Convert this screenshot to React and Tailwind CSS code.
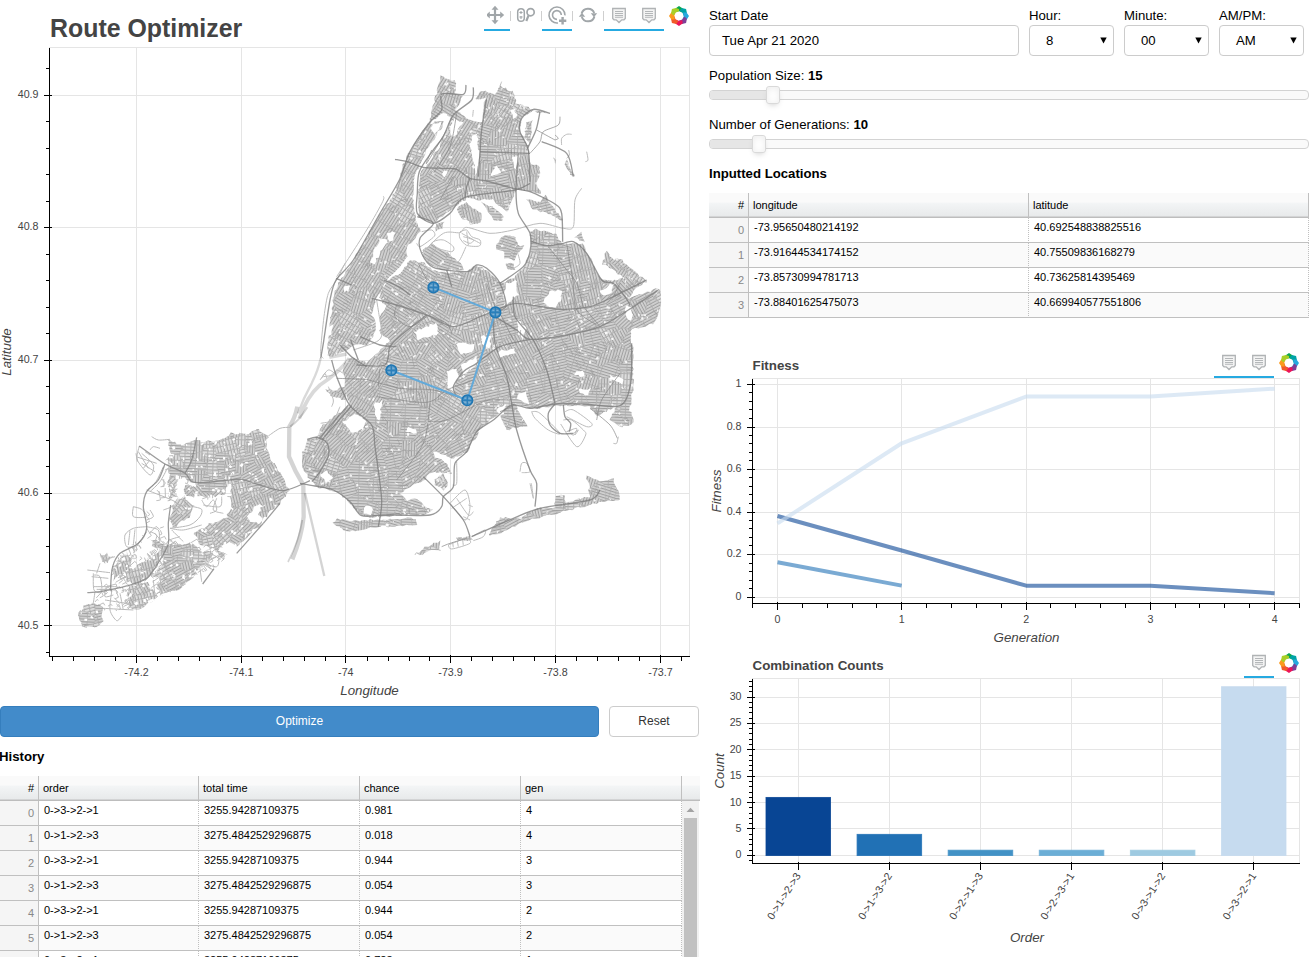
import React from "react";

/* ---------- street map generator ---------- */

function makeRandom(seed) {
  let s = seed;
  return () => {
    s = (s * 1664525 + 1013904223) % 4294967296;
    return s / 4294967296;
  };
}

const parse = (str) => str.trim().split(/\s+/).map((p) => p.split(",").map(Number));

// Breaks a coarse outline into short jagged steps, like the edge of a street grid.
function roughen(str, rnd, amp = 4) {
  const pts = parse(str);
  const out = [];
  pts.forEach((p, i) => {
    const q = pts[(i + 1) % pts.length];
    const n = Math.max(1, Math.round(Math.hypot(q[0] - p[0], q[1] - p[1]) / 9));
    for (let k = 0; k < n; k++) {
      const t = k / n;
      out.push([
        p[0] + (q[0] - p[0]) * t + (rnd() - 0.5) * amp * 2,
        p[1] + (q[1] - p[1]) * t + (rnd() - 0.5) * amp * 2,
      ]);
    }
  });
  return out.map((p) => p[0].toFixed(1) + "," + p[1].toFixed(1)).join(" ");
}

// Smooth curve through a list of points.
function curve(str) {
  const p = parse(str);
  let d = `M${p[0][0]},${p[0][1]}`;
  for (let i = 0; i < p.length - 1; i++) {
    const a = p[i - 1] || p[i];
    const b = p[i];
    const c = p[i + 1];
    const e = p[i + 2] || c;
    const f = (v) => v.toFixed(1);
    d += ` C${f(b[0] + (c[0] - a[0]) / 7)},${f(b[1] + (c[1] - a[1]) / 7)} ${f(c[0] - (e[0] - b[0]) / 7)},${f(c[1] - (e[1] - b[1]) / 7)} ${c[0]},${c[1]}`;
  }
  return d;
}

function clipHalf(poly, mx, my, nx, ny) {
  const out = [];
  for (let i = 0; i < poly.length; i++) {
    const a = poly[i];
    const b = poly[(i + 1) % poly.length];
    const da = (a[0] - mx) * nx + (a[1] - my) * ny;
    const db = (b[0] - mx) * nx + (b[1] - my) * ny;
    if (da <= 0) out.push(a);
    if (da * db < 0) {
      const t = da / (da - db);
      out.push([a[0] + (b[0] - a[0]) * t, a[1] + (b[1] - a[1]) * t]);
    }
  }
  return out;
}

// Voronoi districts, each with the street direction of its nearest anchor.
function districts(x0, y0, x1, y1, step, anchors, rnd, looseShare) {
  const cols = Math.ceil((x1 - x0) / step);
  const rows = Math.ceil((y1 - y0) / step);
  const seeds = [];
  for (let r = 0; r < rows; r++)
    for (let c = 0; c < cols; c++)
      seeds.push([x0 + (c + rnd()) * step, y0 + (r + rnd()) * step]);
  return seeds.map((s, i) => {
    let poly = [
      [s[0] - step * 2, s[1] - step * 2],
      [s[0] + step * 2, s[1] - step * 2],
      [s[0] + step * 2, s[1] + step * 2],
      [s[0] - step * 2, s[1] + step * 2],
    ];
    const r = Math.floor(i / cols);
    const c = i % cols;
    for (let dr = -2; dr <= 2; dr++)
      for (let dc = -2; dc <= 2; dc++) {
        const rr = r + dr;
        const cc = c + dc;
        if ((!dr && !dc) || rr < 0 || cc < 0 || rr >= rows || cc >= cols) continue;
        const o = seeds[rr * cols + cc];
        poly = clipHalf(poly, (s[0] + o[0]) / 2, (s[1] + o[1]) / 2, o[0] - s[0], o[1] - s[1]);
      }
    let best = anchors[0];
    let bd = Infinity;
    anchors.forEach((a) => {
      const d = Math.hypot(a[0] - s[0], a[1] - s[1]);
      if (d < bd) {
        bd = d;
        best = a;
      }
    });
    let ang = best[2] + (rnd() - 0.5) * 14;
    const roll = rnd();
    if (roll < (best[3] ?? 0.25)) ang += 90;
    const k = ((Math.round(ang / 15) % 12) + 12) % 12;
    return { d: poly.map((p) => p[0].toFixed(1) + "," + p[1].toFixed(1)).join(" "), k, loose: rnd() < looseShare };
  });
}

const MAIN_LAND = [
  // Manhattan
  "385,222 358,255 330,305 308,345 300,385 280,435 240,490 205,555 160,630 130,680 112,700 98,760 88,820 86,870 82,900 88,922 130,905 165,885 205,885 222,850 226,822 215,795 226,750 262,690 300,650 322,618 316,600 346,562 360,545 346,505 338,430 344,375 366,330 382,295 408,260 432,215 415,215",
  // Bronx
  "420,78 465,92 467,130 488,135 468,180 500,205 545,215 555,150 585,130 600,108 640,125 648,160 700,180 665,205 660,245 685,290 690,340 716,345 718,370 712,400 725,430 700,425 650,415 640,440 620,488 600,470 580,450 540,450 500,445 480,458 400,520 375,510 356,495 355,430 362,370 392,330 420,290 440,240 455,200 430,190 385,222 410,130",
  "468,475 500,455 545,492 540,518 512,522 480,500", "545,455 575,470 608,498 608,514 585,512 570,490", "680,450 720,455 735,432 750,462 785,505 790,515 745,490 700,480",
  "525,150 540,122 580,130 582,142", "690,178 750,190 710,188", "800,330 825,380 812,376 796,345", "758,322 772,326 765,342", "680,215 695,210 690,280 672,262",
  "412,525 432,515 430,535 405,545",
  // Astoria, College Point, Throgs Neck
  "370,600 395,582 450,615 482,640 492,660 440,662 400,652 368,620",
  "588,590 612,556 645,560 655,585 672,588 665,603 650,605 645,632 612,625 610,600 588,597", "615,640 640,640 645,660 625,655",
  "825,560 845,548 855,575 838,572",
  // Brooklyn and Queens
  "330,630 372,640 400,660 440,668 500,668 530,646 560,660 600,700 640,684 668,655 690,610 692,545 706,538 770,552 786,580 845,580 862,610 880,645 900,685 945,692 968,680 905,640 920,604 940,630 960,625 1040,695 1010,712 985,745 1076,715 1082,722 1080,780 1060,822 990,840 998,900 1000,1010 990,1080 1000,1120 965,1132 930,1110 950,1068 890,1100 870,1068 790,1067 690,1076 645,1062 682,1128 620,1140 598,1090 545,1130 500,1208 452,1228 400,1205 440,1240 458,1270 430,1270 395,1265 360,1300 330,1308 300,1330 320,1350 345,1345 395,1382 380,1392 240,1400 190,1400 150,1360 110,1325 50,1310 36,1295 10,1260 5,1215 22,1168 50,1162 62,1130 110,1095 150,1065 140,1035 132,990 128,945 152,920 200,938 240,900 268,870 240,850 240,800 262,770 236,745 255,700 300,668",
  "75,1020 110,1018 138,1010 136,1050 100,1040",
  // Coney Island, the Rockaways, Breezy Point
  "100,1420 110,1405 140,1412 350,1405 352,1425 230,1430 140,1445",
  "570,1445 600,1402 650,1405 720,1375 765,1372 765,1335 792,1338 800,1356 870,1340 866,1300 858,1278 900,1292 940,1285 960,1330 958,1348 880,1362 790,1385 690,1410 570,1460",
  "470,1462 510,1460 515,1470 475,1472", "352,1512 375,1490 395,1485 420,1470 422,1500 395,1502 365,1514",
  "402,1290 430,1270 445,1300 430,1322 405,1305",
];

const MAIN_HOLES = [
  "448,240 465,208 490,215 470,250 455,265", "500,155 548,150 545,210 525,208 505,196", "515,260 530,250 536,290 534,370 526,380 520,330 510,290",
  "436,95 445,100 440,110", "395,225 425,215 405,260 395,245", "590,350 600,370 570,375", "630,185 645,178 650,200 640,205", "500,450 530,455 540,475 520,480",
  "220,600 250,565 262,575 235,620 222,645 212,640", "262,550 285,545 280,575 262,572", "130,710 150,705 148,722 130,725", "78,830 98,825 96,850 78,855",
  "620,700 650,690 655,735 612,770 610,735", "750,725 785,722 785,745 770,775 725,760", "655,810 680,835 670,870 655,850", "340,845 410,818 415,850 355,870",
  "470,882 520,880 520,905 480,910", "540,860 575,855 570,895 548,885", "440,965 470,955 475,985 460,1025 440,1005", "480,950 530,918 530,945 490,975",
  "590,905 640,895 650,910 600,925", "655,1030 680,1025 685,1060 655,1050", "930,975 970,985 965,1000 928,990", "130,1115 165,1090 200,1110 190,1140 155,1145",
  "318,1135 348,1135 348,1148 318,1148", "60,1275 80,1262 98,1285 78,1300", "225,1060 245,1050 240,1110 222,1095", "395,1200 450,1225 445,1240 400,1215",
  "190,1372 215,1370 215,1398 192,1392", "975,770 998,770 996,810 980,805", "835,1020 870,1015 868,1035 840,1032", "815,970 850,965 850,980", "700,1060 720,1055 715,1065",
  "590,1080 620,1060 610,1090 600,1100", "225,765 240,800 235,860 222,865 236,820 222,795", "900,720 940,700 935,730 912,735",
  "640,320 655,310 650,360 640,345", "430,365 440,362 438,385 428,380",
];

const MAIN_ROADS = [
  "285,328 325,336 370,352 430,355 470,358 510,385 560,393 640,415 690,425 765,462 785,490 788,575",
  "520,112 515,150 460,195 430,260 400,300 358,365 352,430 352,490 400,520 450,490 495,442 645,420 690,400",
  "498,105 490,133 425,132 425,180 385,222 330,305 298,390 240,490 160,630 108,690 90,750 70,880 62,925",
  "560,145 545,240 540,310 535,380", "510,385 500,410 495,442", "540,305 690,310",
  "750,190 700,178 665,205 660,245 685,300 690,395", "655,310 648,420 655,490 690,550 690,605 670,650 600,700",
  "720,185 708,240 680,300", "725,275 800,310 820,380",
  "695,575 740,587 790,580 820,575 860,610 905,690 940,700 975,740 990,765",
  "352,500 400,520 360,565 365,610 400,652 500,665 530,645 560,655 600,700 618,768 585,785",
  "440,660 455,710", "108,685 155,705", "252,690 300,712 330,735",
  "215,745 290,765 380,795 460,830 540,800 590,780 650,760 780,778 870,770 940,740 1040,690",
  "640,740 645,800 700,870 740,960 765,1060", "585,800 650,840 690,868 800,855 900,830 985,780 1075,720",
  "470,1040 460,1010 490,965 530,940 600,890 690,868",
  "580,790 585,880 620,980 635,1060 650,1140 690,1260 710,1300 705,1370",
  "765,1062 745,1090 750,1125 780,1150 820,1150", "790,1065 795,1100 812,1120 808,1145",
  "0,1300 45,1308 100,1320 150,1355 185,1397 250,1395 390,1395 425,1370 430,1340 460,1310 465,1240 500,1205 530,1145 580,1110 635,1065 690,1075 765,1062 850,1062 960,1067 992,1000 995,880",
  "380,795 310,850 270,890 255,945 170,945", "180,860 240,885 290,890", "120,885 160,925 200,950", "152,870 175,930",
  "95,930 110,980 150,1067 215,1125 225,1190 245,1350 235,1430", "155,1067 65,1170", "146,1064 58,1165",
  "22,1168 50,1162 80,1178 86,1215 60,1265 36,1295", "370,1280 430,1340 490,1410 510,1460", "515,1460 640,1405 720,1375 870,1350 900,1320",
];

const SECOND_ROADS = [
  "780,200 775,225 730,245 720,275 690,310", "710,240 765,270", "765,270 775,265 765,255", "745,590 800,660 830,700 850,770", "640,1068 600,1085",
  "200,988 300,1015 400,1020 500,1050", "230,1040 380,1057 440,1020 520,990", "390,1060 370,1180 290,1290", "385,1115 440,1110 550,1055 600,1050",
  "380,795 440,820 455,850", "870,1075 930,1125 952,1165", "960,970 905,1050 890,1110", "425,1490 450,1480 500,1465", "820,700 830,780 890,825", "800,580 820,700",
  "395,300 380,340 440,240", "470,190 450,290 400,370", "590,785 560,700", "290,765 285,800 330,830 380,800", "850,770 900,830", "420,450 460,380",
  "110,985 200,988", "235,1010 240,950", "260,1395 300,1390", "355,640 380,690", "640,870 600,790", "940,740 960,700",
];

const THIN_ROADS = [
  "365,610 430,550 480,548 500,532 570,550 640,540 720,520 790,535 820,530 825,450 845,415", "250,438 248,455 200,540 110,680",
  "70,925 62,905 72,800 85,730 110,690 135,640", "480,545 500,540 515,560 540,570 538,588 500,586 480,565 478,548", "490,560 520,570 510,580 490,572", "485,550 540,580", "500,545 505,585",
  "445,635 475,635 498,590", "695,1085 720,1090 780,1150 745,1140 705,1105 695,1085", "782,1122 830,1190 857,1155 850,1140 815,1110 790,1110",
  "795,1085 820,1080 875,1120 860,1130 800,1100", "450,1360 495,1320 510,1370 495,1410 450,1360", "470,1345 505,1395 520,1385", "505,1365 518,1370", "455,1375 500,1345", "490,1400 510,1410",
  "445,1485 470,1475 500,1465 510,1480 455,1497 445,1485", "515,1460 555,1440 550,1460 520,1472", "460,1492 458,1478", "475,1490 472,1474", "490,1486 488,1470", "660,1265 665,1240 680,1240 690,1265 665,1268",
  "785,285 785,265 800,253 815,253", "806,300 808,315 800,325", "860,305 864,330 856,335", "230,750 238,800 246,850 230,875 160,900",
  "380,600 400,575 430,570 460,590 455,605 410,595", "395,580 420,600", "70,980 100,975 110,960 130,970", "60,990 85,960 110,975", "65,985 75,970 80,985",
  "85,1010 100,1050 95,1070", "690,1300 700,1345 694,1300", "350,870 320,850 350,820 380,815", "345,1515 350,1508 360,1515", "600,108 605,95",
  "365,545 395,540 405,555 390,570 360,590 350,580", "660,870 662,840", "940,1180 950,1180 955,1160", "820,1150 835,1140 825,1155",
  "470,1235 470,1300 458,1305", "120,1070 100,1110 62,1120", "640,655 660,640 650,600", "480,665 440,690", "815,1140 800,1145 830,1135 822,1155 810,1150",
  "520,180 518,200", "500,460 540,510 520,515 530,490",
];

const MAIN_ANCHORS = [
  [250, 450, -62, 0.08], [150, 700, -62, 0.08], [190, 600, -62, 0.08], [120, 850, -62, 0.3], [330, 330, -62, 0.1],
  [430, 300, -62], [600, 180, -65, 0.1], [600, 270, 5, 0.1], [560, 420, 80], [420, 450, -30], [650, 360, 80, 0.2],
  [350, 700, 30, 0.1], [480, 730, 15, 0.2], [560, 760, 75, 0.3], [740, 640, 5, 0.1], [830, 680, 75], [980, 680, 40], [1040, 770, -35, 0.1],
  [320, 900, -40], [300, 980, 10, 0.1], [350, 1030, 82, 0.1], [400, 920, 35, 0.1], [540, 990, -20], [470, 1060, 30],
  [740, 980, -20, 0.1], [680, 920, 60], [880, 950, 15], [950, 1030, 0, 0.3], [850, 820, -20], [640, 1110, 5, 0.05],
  [170, 1000, -55, 0.1], [130, 1200, -50, 0.06], [50, 1220, -70, 0.1], [200, 1160, -50, 0.1], [260, 1250, -5, 0.1], [300, 1130, 0],
  [450, 1170, -35, 0.15], [360, 1260, -35], [260, 1350, 5, 0.2], [250, 1420, 5], [650, 1410, -20, 0.1], [900, 1320, 10], [200, 1300, -5, 0.1],
];

const SI_OUTLINE =
  "350,90 400,105 440,92 510,95 545,70 600,70 650,75 656,140 690,185 716,240 640,335 560,425 520,455 500,470 440,495 390,537 330,560 270,598 170,605 130,580 130,530 180,515 188,460 215,430 290,365 290,290 330,220 350,165";

const SI_LAND = [
  "350,90 400,105 440,92 510,95 545,70 600,70 620,58 650,75 656,140 690,185 716,240 690,280 640,330 620,310 640,285 610,290 590,320 600,340 640,338 600,372 560,400 530,400 500,420 455,405 430,370 470,345 530,325 545,280 540,215 520,255 470,260 440,255 440,225 410,210 380,195 378,265 358,265 355,170 350,150 375,140 360,120",
  "372,275 400,262 430,290 418,320 370,355 358,330", "405,225 440,232 432,262 405,258",
  "340,410 400,400 430,400 455,430 480,415 490,440 440,480 435,495 390,535 350,545 325,550 325,500 300,500 340,460",
  "215,440 235,425 245,470 215,490 190,510 188,470", "225,485 300,450 340,410 330,450 300,500 260,520 225,515", "300,390 340,400 335,420 310,405",
  "240,530 290,515 310,540 320,560 290,580 270,598 240,592 232,560", "88,612 105,588 130,578 150,585 160,600 158,640 140,648 105,655 92,640",
  "540,380 600,345 605,370 560,410", "500,420 530,430 525,448 505,440", "152,440 172,432 186,442 175,456 158,452",
];
const SI_ROADS = [
  "268,108 345,162 405,190 425,215 460,218 520,212 575,208 620,222 700,242 780,212", "440,82 425,150 405,190",
  "345,162 325,210 290,245 280,290 290,355 265,400 210,430 188,470 182,530 185,545", "362,285 355,340 355,400 330,450 290,505 230,528 150,545 112,548",
  "640,340 560,430", "690,280 640,340", "492,476 458,522",
];
const SI_THIN = [
  "305,80 325,90 360,88", "268,108 262,150 300,195 310,165 275,130", "258,140 320,160", "275,160 315,185", "265,125 295,175", "290,240 375,275 365,290 340,300", "250,290 275,298 290,320 250,320 250,290",
  "290,350 250,355 225,375 230,410 260,405 290,365", "240,362 235,405", "255,358 250,405", "290,350 325,360 328,390", "300,365 320,375 315,395", "430,290 455,298 450,320 420,345 360,355", "360,355 400,360 455,345",
  "455,270 470,290 490,270 500,300 480,310", "460,285 510,290 515,260", "500,265 490,300 520,310", "112,480 180,488", "130,490 132,540 155,545 150,500 130,495", "125,500 175,505", "150,460 140,490",
  "135,545 130,580", "185,545 180,600 200,632 215,618", "165,570 230,580", "160,595 250,600", "210,550 220,600", "480,430 505,445 500,470 460,460", "455,460 490,480", "450,475 455,515",
  "655,78 690,55 720,52", "310,510 315,560", "330,500 335,550", "350,500 355,545", "365,360 400,395", "375,400 360,390 390,380", "550,125 590,150 605,135", "560,160 605,140", "300,300 310,320 290,330", "150,430 165,460", "160,450 195,440",
  "352,175 330,215 300,245", "340,170 318,215 292,240", "500,440 430,480 390,530 330,552", "130,530 200,530", "140,538 195,540", "190,555 165,560 168,532", "300,120 310,110 330,115", "285,125 300,135", "280,175 300,150", "258,130 262,155",
];
const SI_ANCHORS = [
  [450, 180, 0, 0.5], [550, 100, -10, 0.5], [650, 200, -30, 0.5], [560, 330, -50, 0.1], [400, 290, 40, 0.4], [250, 490, 70, 0.1], [400, 440, -5, 0.3], [400, 500, -30, 0.2], [120, 620, -8, 0.1], [600, 260, 70, 0.3],
];

const rand = makeRandom(77);
const mainShapes = MAIN_LAND.map((s) => roughen(s, rand, 3.2));
const mainHoles = MAIN_HOLES.map((s) => roughen(s, rand, 4));
const siShapes = SI_LAND.map((s) => roughen(s, rand, 5));
const mainCells = districts(-20, 60, 1100, 1540, 46, MAIN_ANCHORS, rand, 0.14);
const siCells = districts(70, 40, 740, 670, 30, SI_ANCHORS, rand, 0.3);
const specks = (x0, y0, x1, y1, n, max) =>
  Array.from({ length: n }, () => {
    const w = 2 + rand() * max;
    const h = 2 + rand() * max * 0.7;
    return [x0 + rand() * (x1 - x0), y0 + rand() * (y1 - y0), w, h, rand() * 180];
  });
const mainSpecks = specks(0, 60, 1090, 1500, 1700, 8);
const siSpecks = specks(80, 50, 720, 660, 520, 9);
const lanes = (x0, y0, x1, y1, n, tilt) =>
  Array.from({ length: n }, () => {
    const a = ((tilt + (rand() < 0.5 ? 90 : 0) + (rand() - 0.5) * 40) * Math.PI) / 180;
    const len = 8 + rand() * 22;
    const x = x0 + rand() * (x1 - x0);
    const y = y0 + rand() * (y1 - y0);
    const b = a + 1.5;
    return `M${x.toFixed(1)},${y.toFixed(1)} l${(Math.cos(a) * len).toFixed(1)},${(Math.sin(a) * len).toFixed(1)} l${(Math.cos(b) * len * 0.5).toFixed(1)},${(Math.sin(b) * len * 0.5).toFixed(1)}`;
  }).join(" ");
const siLanes = lanes(130, 400, 520, 600, 330, -35) + lanes(340, 80, 700, 260, 120, 0) + lanes(150, 90, 360, 430, 55, -30);
const mainLanes = lanes(0, 80, 1080, 1400, 900, -25);

const HATCHES = Array.from({ length: 12 }, (_, i) => i);

function StreetCells({ cells }) {
  return cells.map((c, i) => (
    <polygon key={i} points={c.d} fill={`url(#h${c.k}${c.loose ? "l" : ""})`} stroke="#ababab" strokeWidth="1.3" />
  ));
}

function StreetMap() {
  return (
    <g>
      <defs>
        {HATCHES.map((i) => (
          <React.Fragment key={i}>
            <pattern id={`h${i}`} width="44" height="8.4" patternUnits="userSpaceOnUse" patternTransform={`rotate(${i * 15 + 2})`}>
              <rect width="44" height="8.4" fill="#d3d3d3" />
              <rect width="44" height="3.2" fill="#a0a0a0" />
              <rect width="2.2" height="8.4" fill="#adadad" />
            </pattern>
            <pattern id={`h${i}l`} width="17" height="9.5" patternUnits="userSpaceOnUse" patternTransform={`rotate(${i * 15 + 2})`}>
              <rect width="17" height="9.5" fill="#dddddd" />
              <rect width="17" height="3.2" fill="#a6a6a6" />
              <rect width="2.8" height="9.5" fill="#b0b0b0" />
            </pattern>
          </React.Fragment>
        ))}
        <clipPath id="mainland">{mainShapes.map((p, i) => <polygon key={i} points={p} />)}</clipPath>
        <clipPath id="staten">{siShapes.map((p, i) => <polygon key={i} points={p} />)}</clipPath>
        <clipPath id="island"><polygon points={SI_OUTLINE} /></clipPath>
      </defs>
      <g transform="translate(50 410) scale(0.33333)" fill="none" strokeLinejoin="round">
        <g stroke="#000" strokeOpacity="0.17">
          <path d="M742,-10 Q735,25 718,50 L717,140 Q735,185 760,225 L761,320 Q755,380 727,448" strokeWidth="13" />
          <path d="M772,-8 Q745,35 720,50" strokeWidth="6" />
          <path d="M765,250 L823,498" strokeWidth="7" />
          <path d="M757,330 Q748,390 714,456" strokeWidth="5" />
        </g>
        <g clipPath="url(#island)">
          <path d={siLanes} stroke="#b9b9b9" strokeWidth="2.8" />
        </g>
        <g fill="#fff">
          <polygon points="440,300 535,265 530,325 430,345 375,360" />
          <polygon points="300,270 355,280 352,350 300,345" />
          <polygon points="385,205 405,215 400,262 380,262" />
          <polygon points="550,165 600,140 600,170 565,185" />
          <polygon points="250,430 300,400 320,415 270,440" />
        </g>
        <g clipPath="url(#staten)">
          <StreetCells cells={siCells} />
          {siSpecks.map((s, i) => (
            <rect key={i} width={s[2]} height={s[3]} fill="#fff" transform={`translate(${s[0]} ${s[1]}) rotate(${s[4]})`} />
          ))}
        </g>
        <g stroke="#b9b9b9" strokeWidth="3">
          {SI_THIN.map((r, i) => <path key={i} d={curve(r)} />)}
        </g>
        <g stroke="#808080" strokeWidth="3.9" strokeOpacity="0.78">
          {SI_ROADS.map((r, i) => <path key={i} d={curve(r)} />)}
        </g>
      </g>
      <g transform="translate(300 50) scale(0.33333)" fill="none" strokeLinejoin="round">
        <g stroke="#000" strokeOpacity="0.15">
          <path d="M148,925 Q120,965 60,1005 Q20,1040 -2,1105" strokeWidth="11" />
          <path d="M62,925 Q55,960 35,1000 Q10,1045 -6,1090" strokeWidth="7" />
          <path d="M88,922 L140,912" strokeWidth="10" />
        </g>
        <g clipPath="url(#mainland)">
          <StreetCells cells={mainCells} />
          {mainSpecks.map((s, i) => (
            <rect key={i} width={s[2]} height={s[3]} fill="#fff" fillOpacity="0.85" transform={`translate(${s[0]} ${s[1]}) rotate(${s[4]})`} />
          ))}
          <path d={mainLanes} stroke="#999" strokeWidth="2.2" strokeOpacity="0.7" />
        </g>
        {mainHoles.map((p, i) => <polygon key={i} points={p} fill="#fff" />)}
        <g stroke="#bcbcbc" strokeWidth="3">
          {THIN_ROADS.map((r, i) => <path key={i} d={curve(r)} />)}
        </g>
        <g stroke="#858585" strokeWidth="3" strokeOpacity="0.7">
          {SECOND_ROADS.map((r, i) => <path key={i} d={curve(r)} />)}
        </g>
        <g stroke="#7c7c7c" strokeWidth="4" strokeOpacity="0.78">
          {MAIN_ROADS.map((r, i) => <path key={i} d={curve(r)} />)}
        </g>
      </g>
    </g>
  );
}

/* ---------- toolbar ---------- */

const LOGO = ["#0ba64f", "#00a3a6", "#26a9e0", "#7f3f98", "#ec145a", "#f15a29", "#fb9a1c", "#a9cf27"];

function Logo() {
  return (
    <svg width="20" height="20" viewBox="-10 -10 20 20" className="mx-[5px] mt-[6px] block">
      {LOGO.map((c, i) => (
        <polygon key={c} points="-3.6,-7.6 0,-10 3.4,-7.8 4.9,-4.9 3.4,-3.4 0.2,-4.7 -3.4,-4.2" fill={c} transform={`rotate(${i * 45})`} />
      ))}
    </svg>
  );
}

function Tool({ children, active, width = "w-[30px]" }) {
  return (
    <div className={`${width} h-[31px] flex justify-center pt-[5px] border-b-2 ${active ? "border-[#26aae1]" : "border-transparent"}`}>
      <svg width="20" height="20" viewBox="0 0 20 20" fill="none" stroke="#a1a6a9" className="block shrink-0">
        {children}
      </svg>
    </div>
  );
}

const Divider = () => <div className="w-px h-[10px] mt-[11px] bg-[#cfcfcf]" />;

const Hover = () => (
  <Tool active>
    <path d="M3.7,3.5 h12.6 v10 l-1.3,1.3 h-2.2 l-2.8,2.7 l-2.8,-2.7 h-2.2 l-1.3,-1.3 z" fill="#f4f4f4" stroke="#b0b3b5" strokeWidth="1.3" />
    <path d="M6,6.5 h8 M6,8.5 h8 M6,10.5 h8 M6,12.3 h8" stroke="#b4b7b9" strokeWidth="1.1" />
  </Tool>
);

/* ---------- charts ---------- */

const FONT = "Liberation Sans, Arial, sans-serif";

function Ticks({ x, y, vertical, inner = 2, outer }) {
  return vertical ? <path d={`M${x + inner},${y} H${x - outer}`} /> : <path d={`M${x},${y - inner} V${y + outer}`} />;
}

const range = (from, to, step) => {
  const out = [];
  for (let v = from; v <= to + 0.01; v += step) out.push(v);
  return out;
};
const snap = (v) => Math.floor(v) + 0.5;
const between = (minor, major) => minor.filter((v) => !major.some((t) => Math.abs(t[0] - v) < 2));

function Axes({ left, right, top, bottom, xs, ys, minorX, minorY, children }) {
  return (
    <g fontFamily={FONT} fontSize="10.67" fill="#444">
      <g stroke="#e5e5e5" shapeRendering="crispEdges" fill="none">
        {xs.map((t) => <path key={t[0]} d={`M${snap(t[0])},${top} V${bottom}`} />)}
        {ys.map((t) => <path key={t[0]} d={`M${left},${snap(t[0])} H${right}`} />)}
        <rect x={left} y={top} width={right - left} height={bottom - top} />
      </g>
      {children}
      <g stroke="#000" shapeRendering="crispEdges" fill="none">
        <path d={`M${left},${top} V${bottom} H${right}`} />
        {xs.map((t) => <Ticks key={t[0]} x={snap(t[0])} y={bottom} outer={6} />)}
        {ys.map((t) => <Ticks key={t[0]} x={left} y={snap(t[0])} vertical outer={6} />)}
        {between(minorX, xs).map((v) => <Ticks key={v} x={snap(v)} y={bottom} inner={0} outer={4} />)}
        {between(minorY, ys).map((v) => <Ticks key={v} x={left} y={snap(v)} vertical inner={0} outer={4} />)}
      </g>
      {ys.map((t) => <text key={t[0]} x={left - 11} y={t[0] + 3} textAnchor="end">{t[1]}</text>)}
    </g>
  );
}

const AxisName = (p) => (
  <text fontFamily={FONT} fontSize="13.33" fontStyle="italic" fill="#444" textAnchor="middle" {...p} />
);

const STOPS = [[391.3, 370.3], [467.3, 400.3], [495.4, 312.4], [433.4, 287.4]];

function MapPlot() {
  const xs = [[136.5, "-74.2"], [241.3, "-74.1"], [345.8, "-74"], [450.5, "-73.9"], [555.5, "-73.8"], [660.5, "-73.7"]];
  const ys = [[95.3, "40.9"], [227.3, "40.8"], [360.3, "40.7"], [493.3, "40.6"], [625.8, "40.5"]];
  return (
    <section className="relative h-[706px] w-[700px]">
      <svg width="700" height="706" viewBox="0 0 700 706" className="block">
        <text x="50" y="37" fontFamily={FONT} fontSize="24.9" fontWeight="bold" fill="#444">Route Optimizer</text>
        <Axes left={49.5} right={689.5} top={47.5} bottom={656.5} xs={xs} ys={ys} minorX={range(52.7, 689, 20.96)} minorY={range(68.6, 656, 26.53)}>
          <StreetMap />
          <polyline points={STOPS.map((p) => p.join(",")).join(" ")} fill="none" stroke="#62a9d9" strokeWidth="2" />
          {STOPS.map((p) => (
            <g key={p[0]} transform={`translate(${p[0]} ${p[1]})`} stroke="#1f77b4">
              <circle r="5.2" fill="#3d8cc4" fillOpacity="0.75" strokeWidth="1.7" />
              <path d="M-5,0 H5 M0,-5 V5" strokeWidth="1.3" stroke="#2b7fba" />
              <path d="M-3,-2 H-1 M1,-2 H3 M-3,2 H-1 M1,2 H3" stroke="#7db7de" strokeWidth="1" />
            </g>
          ))}
        </Axes>
        <g fontFamily={FONT} fontSize="10.67" fill="#444" textAnchor="middle">
          {xs.map((t) => <text key={t[0]} x={t[0]} y="676">{t[1]}</text>)}
        </g>
        <AxisName x="369.5" y="695">Longitude</AxisName>
        <AxisName transform="translate(11 352) rotate(-90)">Latitude</AxisName>
      </svg>
      <div className="absolute top-0 right-[6px] flex">
        <Tool active width="w-[26px]">
          <g transform="translate(-2 0)">
            <path d="M10,3 V17 M3,10 H17" strokeWidth="2.2" />
            <path d="M10,0.8 l3.5,4 h-7 z M10,19.2 l3.5,-4 h-7 z M0.8,10 l4,-3.5 v7 z M19.2,10 l-4,-3.5 v7 z" fill="#a1a6a9" stroke="none" />
          </g>
        </Tool>
        <Divider />
        <Tool>
          <rect x="1.7" y="3.8" width="6.6" height="12.4" rx="3.3" strokeWidth="1.5" />
          <path d="M5,6 v3 M3.4,7.5 h3.2 M3.4,12 h3.2 M5,11 v3" strokeWidth="1.1" />
          <circle cx="14.6" cy="7.2" r="3.6" strokeWidth="1.7" />
          <path d="M12.6,10.4 L10.3,16" strokeWidth="2.2" />
        </Tool>
        <Divider />
        <Tool active>
          <path d="M18,10.4 A8,8 0 1 0 11,18" strokeWidth="1.6" />
          <path d="M14.3,10 A4.4,4.4 0 1 0 10,14.4" strokeWidth="1.6" />
          <path d="M15.6,12 v7.4 M12,15.7 h7.3" strokeWidth="2.4" />
        </Tool>
        <Divider />
        <Tool>
          <path d="M3.6,8.6 A6.6,6.6 0 0 1 16.2,8 M16.4,11.4 A6.6,6.6 0 0 1 3.8,12" strokeWidth="2" />
          <path d="M12.8,8.3 h6.4 l-3.2,4 z M7.2,11.7 h-6.4 l3.2,-4 z" fill="#a1a6a9" stroke="none" />
        </Tool>
        <Divider />
        <Hover />
        <Hover />
        <Logo />
      </div>
    </section>
  );
}

function FitnessPlot() {
  const xs = [777.5, 901.7, 1026.2, 1150.4, 1274.6].map((x, i) => [x, i]);
  const ys = [[384.3, "1"], [427.2, "0.8"], [469.3, "0.6"], [512.2, "0.4"], [554.3, "0.2"], [597.2, "0"]];
  return (
    <section className="relative h-[300px] w-[600px]">
      <svg width="606" height="300" viewBox="709 350 606 300" className="block overflow-visible">
        <text x="752.5" y="370" fontFamily={FONT} fontSize="13.33" fontWeight="bold" fill="#444">Fitness</text>
        <Axes left={752.5} right={1299.5} top={378.5} bottom={603.5} xs={xs} ys={ys} minorX={range(752.6, 1300, 24.85)} minorY={range(384.3, 597, 8.51)}>
          <g fill="none" strokeWidth="4" strokeOpacity="0.6" strokeLinejoin="round">
            <polyline stroke="#084594" points="777.5,516 901.7,550.5 1026.2,585.7 1150.4,585.7 1274.6,593.2" />
            <polyline stroke="#2171b5" points="777.5,562.2 901.7,585.6" />
            <polyline stroke="#c6dbef" points="777.5,523.4 901.7,443.3 1026.2,396.5 1150.4,396.5 1274.6,388.7" />
          </g>
        </Axes>
        <g fontFamily={FONT} fontSize="10.67" fill="#444" textAnchor="middle">
          {xs.map((t) => <text key={t[0]} x={t[0]} y="623">{t[1]}</text>)}
        </g>
        <AxisName x="1026.5" y="642">Generation</AxisName>
        <AxisName transform="translate(721 491) rotate(-90)">Fitness</AxisName>
      </svg>
      <div className="absolute -top-[3px] right-[5px] flex">
        <Hover />
        <Hover />
        <Logo />
      </div>
    </section>
  );
}

const COUNTS = [
  ["0->1->2->3", 11, "#084594"],
  ["0->1->3->2", 4, "#2171b5"],
  ["0->2->1->3", 1, "#4292c6"],
  ["0->2->3->1", 1, "#6baed6"],
  ["0->3->1->2", 1, "#9ecae1"],
  ["0->3->2->1", 32, "#c6dbef"],
];

function CountPlot() {
  const xs = COUNTS.map((c, i) => [798.3 + i * 91.1, c[0]]);
  const ys = range(0, 30, 5).map((v) => [855.3 - v * 5.275, v]);
  return (
    <section className="relative h-[307px] w-[600px]">
      <svg width="606" height="307" viewBox="709 650 606 307" className="block">
        <text x="752.5" y="670" fontFamily={FONT} fontSize="13.33" fontWeight="bold" fill="#444">Combination Counts</text>
        <Axes left={752.5} right={1299.5} top={678.5} bottom={863.5} xs={xs} ys={ys} minorX={[]} minorY={range(-1, 33, 1).map((v) => 855.3 - v * 5.275)}>
          {COUNTS.map((c, i) => (
            <rect key={c[0]} x={766 + i * 91.1} y={855.5 - c[1] * 5.275} width="64.5" height={c[1] * 5.275} fill={c[2]} stroke={c[2]} strokeOpacity="0.8" />
          ))}
        </Axes>
        <g fontFamily={FONT} fontSize="10.67" fill="#444" textAnchor="end">
          {xs.map((t) => (
            <text key={t[0]} transform={`translate(${t[0] + 3} 875.8) rotate(-57.3)`}>{t[1]}</text>
          ))}
        </g>
        <AxisName x="1027" y="942">Order</AxisName>
        <AxisName transform="translate(724 771) rotate(-90)">Count</AxisName>
      </svg>
      <div className="absolute -top-[3px] right-[5px] flex">
        <Hover />
        <Logo />
      </div>
    </section>
  );
}

/* ---------- tables ---------- */

const headCell = "h-[25px] pl-1 pt-[5px] leading-[15px] border-r border-[#c0c0c0]";

function DataTable({ columns, rows, grid, tail }) {
  return (
    <div className="text-[11px] text-black">
      <div className={`grid ${grid} h-[25px] border-b border-[#bdbdbd] shadow-[inset_0_-1px_0_#d3d4d5] bg-[linear-gradient(#fafafa_0,#fafafa_38%,#f3f5f6_42%,#e7e9ea_100%)]`}>
        <div className="h-[24px] pr-1 pt-[5px] leading-[15px] text-right border-r border-[#c0c0c0]">#</div>
        {columns.map((c) => <div key={c} className={headCell}>{c}</div>)}
        {tail && <div />}
      </div>
      {rows.map((r, i) => (
        <div key={i} className={`grid ${grid} h-[25px]`}>
          <div className="h-[25px] pr-1 pt-[5px] leading-[15px] text-right text-[#888] bg-[#f5f5f5] border-r border-b border-[#c0c0c0]">{i}</div>
          {r.map((v, j) => (
            <div key={j} className={`h-[25px] pl-[5px] pt-[2px] leading-[15px] border-b border-b-[#c0c0c0] border-r border-r-[#c0c0c0] [border-right-style:dotted] ${i % 2 ? "bg-[#fafafa]" : "bg-white"}`}>{v}</div>
          ))}
        </div>
      ))}
    </div>
  );
}

const HISTORY = [
  ["0->3->2->1", "3255.94287109375", "0.981", "4"],
  ["0->1->2->3", "3275.4842529296875", "0.018", "4"],
  ["0->3->2->1", "3255.94287109375", "0.944", "3"],
  ["0->1->2->3", "3275.4842529296875", "0.054", "3"],
  ["0->3->2->1", "3255.94287109375", "0.944", "2"],
  ["0->1->2->3", "3275.4842529296875", "0.054", "2"],
  ["0->3->2->1", "3255.94287109375", "0.723", "1"],
];

const LOCATIONS = [
  ["-73.95650480214192", "40.692548838825516"],
  ["-73.91644534174152", "40.75509836168279"],
  ["-73.85730994781713", "40.73625814395469"],
  ["-73.88401625475073", "40.669940577551806"],
];

/* ---------- controls ---------- */

function Select({ label, value }) {
  return (
    <div className="w-[85px]">
      <div className="h-[17px] leading-[17px]">{label}</div>
      <div className="mt-px h-[31px] border border-[#ccc] rounded-[4px] bg-white flex items-center justify-between pl-4 pr-[6px]">
        <span>{value}</span>
        <svg width="7" height="7" viewBox="0 0 7 7"><path d="M0.3,0.5 H6.7 L3.5,6.5 Z" fill="#000" /></svg>
      </div>
    </div>
  );
}

function Slider({ label, value, fill }) {
  return (
    <div className="h-[49px]">
      <div className="h-[17px] leading-[17px]">{label}: <b>{value}</b></div>
      <div className="mt-[6px] w-[600px] h-[10px] rounded-[4px] border border-[#d3d3d3] bg-[#fafafa] flex items-center">
        <div className={`${fill} h-[8px] bg-[#e6e6e6] rounded-l-[3px]`} />
        <div className="-ml-px w-[14px] h-[18px] shrink-0 rounded-[3px] border border-[#d9d9d9] bg-white shadow-[inset_0_0_1px_#fff,inset_0_1px_7px_#ebebeb,0_3px_6px_-3px_#bbb]" />
      </div>
    </div>
  );
}

export default function App() {
  return (
    <main className="w-[1315px] h-[957px] overflow-hidden bg-white flex font-['Liberation_Sans',Arial,sans-serif] text-[13.2px] text-black">
      <div className="w-[700px] shrink-0">
        <MapPlot />
        <div className="flex gap-[10px] text-[12px]">
          <button className="w-[599px] h-[31px] pb-[2px] rounded-[4px] border border-[#357ebd] bg-[#428bca] text-white">Optimize</button>
          <button className="w-[90px] h-[31px] pb-[2px] rounded-[4px] border border-[#ccc] bg-white text-[#333]">Reset</button>
        </div>
        <h2 className="-ml-px mt-[11px] h-[28px] leading-[17px] font-bold">History</h2>
        <div className="relative">
          <DataTable
            columns={["order", "total time", "chance", "gen"]}
            rows={HISTORY}
            grid="grid-cols-[39px_160px_161px_161px_161px_17px]"
            tail
          />
          <div className="absolute right-px top-[25px] w-[17px] h-[200px] bg-[#f1f1f1] flex flex-col items-center">
            <svg width="17" height="17" viewBox="0 0 17 17" className="shrink-0"><path d="M4.5,11 L8.5,6.8 L12.5,11 Z" fill="#a3a3a3" /></svg>
            <div className="w-[13px] grow bg-[#c1c1c1]" />
          </div>
        </div>
      </div>
      <div className="ml-[9px] w-[600px] shrink-0 pt-[7px]">
        <div className="h-[60px] flex gap-[10px]">
          <div className="w-[310px]">
            <div className="h-[17px] leading-[17px]">Start Date</div>
            <div className="mt-px h-[31px] border border-[#ccc] rounded-[4px] pl-3 flex items-center">Tue Apr 21 2020</div>
          </div>
          <Select label="Hour:" value="8" />
          <Select label="Minute:" value="00" />
          <Select label="AM/PM:" value="AM" />
        </div>
        <Slider label="Population Size" value="15" fill="w-[57px]" />
        <Slider label="Number of Generations" value="10" fill="w-[43px]" />
        <h2 className="h-[28px] leading-[17px] font-bold">Inputted Locations</h2>
        <DataTable columns={["longitude", "latitude"]} rows={LOCATIONS} grid="grid-cols-[40px_280px_280px]" />
        <div className="h-[32px]" />
        <FitnessPlot />
        <CountPlot />
      </div>
    </main>
  );
}
